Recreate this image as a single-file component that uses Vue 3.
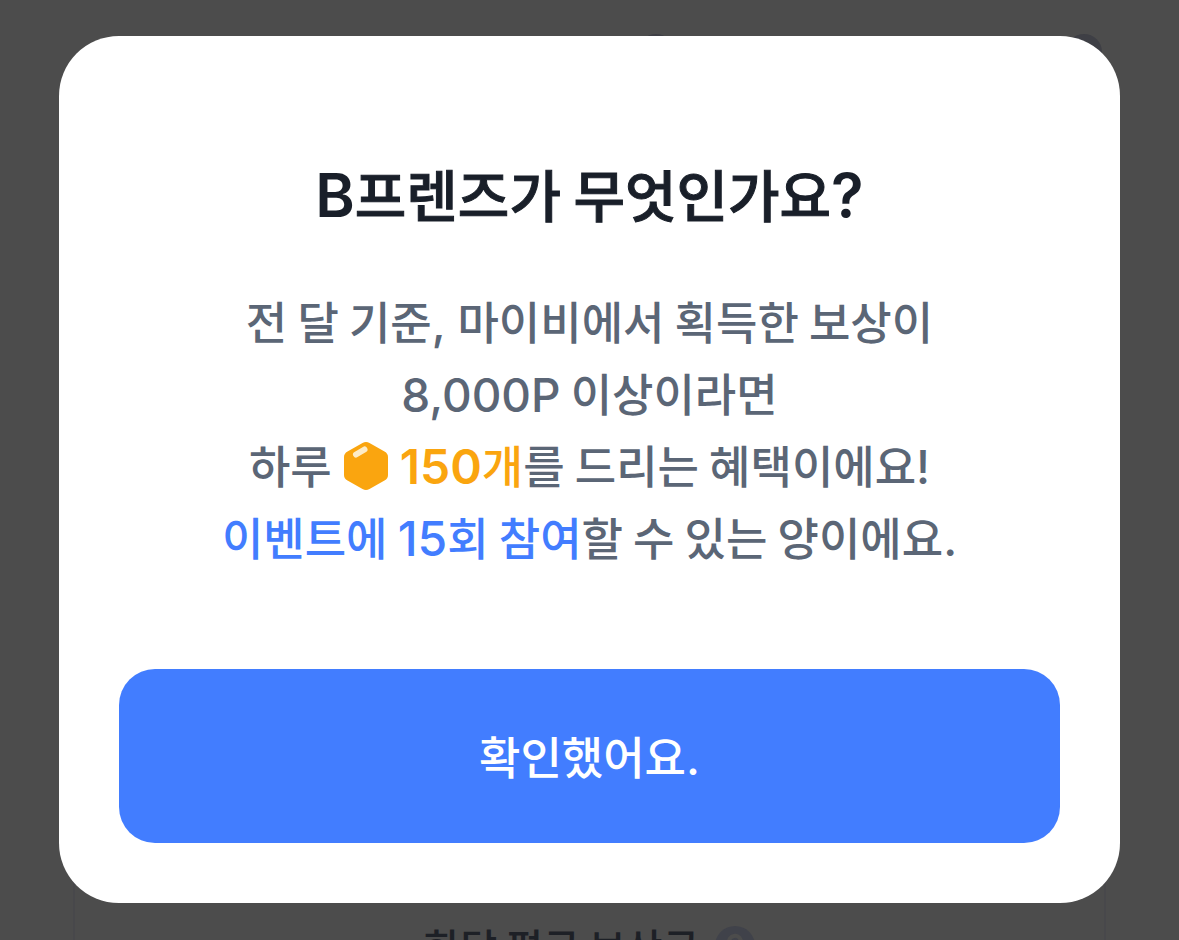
<script setup>
import { ref } from 'vue'

const open = ref(true)
</script>

<template>
  <div class="screen">
    <div class="page" aria-hidden="true">
      <div class="page-head">
        <span class="mark"></span>
        <span class="dot"></span>
      </div>
      <section class="card">
        <div class="card-title">
          <span>한달 평균 보상금</span>
          <svg class="help" viewBox="0 0 40 40">
            <circle cx="20" cy="20" r="20" fill="#40424a" />
            <path d="M14 16a6 6 0 1 1 9 5c-2 1-3 2-3 4" fill="none" stroke="#4c4c4c" stroke-width="4" stroke-linecap="round" />
            <circle cx="20" cy="31" r="2" fill="#4c4c4c" />
          </svg>
        </div>
      </section>
    </div>

    <div v-if="open" class="backdrop">
      <div class="dialog" role="dialog" aria-modal="true" aria-labelledby="dialog-title">
        <h1 id="dialog-title" class="title"><span class="latin">B</span>프렌즈가 무엇인가요<span class="latin">?</span></h1>
        <p class="body">
          전 달 기준<span class="latin">, </span>마이비에서 획득한 보상이<br>
          <span class="latin">8,000P</span> 이상이라면<br>
          하루<svg class="honey" viewBox="0 0 44 50" aria-hidden="true">
            <path d="M18.500 2Q22 0 25.500 2L40.500 10.500Q44 12.500 44 16V34Q44 37.500 40.500 39.500L25.500 48Q22 50 18.500 48L3.500 39.500Q0 37.500 0 34V16Q0 12.500 3.500 10.500Z" fill="#faa50f" />
            <path d="M12 13.500L20.500 8.500" stroke="#fdecc8" stroke-width="6" stroke-linecap="round" />
          </svg><strong class="amount"><span class="latin">150</span>개</strong>를 드리는 혜택이에요<span class="latin">!</span><br>
          <em class="event">이벤트에 <span class="latin">15</span>회 참여</em>할 수 있는 양이에요<span class="latin">.</span>
        </p>
        <button class="confirm" type="button" @click="open = false">확인했어요<span class="latin">.</span></button>
      </div>
    </div>
  </div>
</template>

<style>
body {
  background: #4c4c4c;
}
</style>

<style scoped>
.screen {
  position: relative;
  height: 100vh;
  overflow: hidden;
  background: #4c4c4c;
  font-family: "Noto Sans CJK KR", sans-serif;
}

.latin {
  font-family: Inter, sans-serif;
}

.page {
  display: flex;
  flex-direction: column;
  gap: 24px;
  padding: 34px 73px 0;
}

.page-head {
  display: flex;
  justify-content: flex-end;
  gap: 392px;
  padding-right: 4px;
}

.mark,
.dot {
  width: 36px;
  height: 36px;
  border-radius: 50%;
  background: #3e3f45;
}

.card {
  height: 1000px;
  box-sizing: border-box;
  padding-top: 820px;
  border: 2px solid #48484b;
  border-radius: 48px;
}

.card-title {
  display: flex;
  align-items: center;
  justify-content: center;
  gap: 16px;
  color: #1d2026;
  font-size: 40px;
  font-weight: 500;
  line-height: 60px;
}

.help {
  width: 40px;
  height: 40px;
}

.backdrop {
  position: absolute;
  inset: 0;
  display: flex;
  align-items: center;
  justify-content: center;
  padding: 0 59px 2px;
}

.dialog {
  flex: 1;
  padding: 117px 60px 60px;
  border-radius: 60px;
  background: #fff;
  text-align: center;
}

.title {
  margin: 0;
  color: #191f29;
  font-size: 56px;
  font-weight: 500;
  line-height: 80px;
  -webkit-text-stroke: 1px #191f29;
}

.title .latin {
  font-size: 60px;
  font-weight: 600;
  -webkit-text-stroke: 0;
}

.body {
  margin: 50px 0 96px;
  color: #5b6676;
  font-size: 45px;
  font-weight: 500;
  line-height: 72px;
}

.body .latin,
.confirm .latin {
  font-size: 46px;
  font-weight: 500;
  line-height: 1;
}

.honey {
  width: 44px;
  height: 50px;
  margin: 0 12px;
  vertical-align: -7px;
}

.amount {
  color: #faa50f;
  font-weight: 500;
}

.body .amount .latin {
  font-size: 48px;
  font-weight: 600;
}

.event {
  color: #427dff;
  font-style: normal;
}

.body .event .latin {
  font-size: 48px;
}

.confirm {
  display: block;
  width: 100%;
  padding: 51px 24px;
  border: 0;
  border-radius: 36px;
  background: #427dff;
  color: #fff;
  font-family: inherit;
  font-size: 45px;
  font-weight: 500;
  line-height: 72px;
  cursor: pointer;
}
</style>
